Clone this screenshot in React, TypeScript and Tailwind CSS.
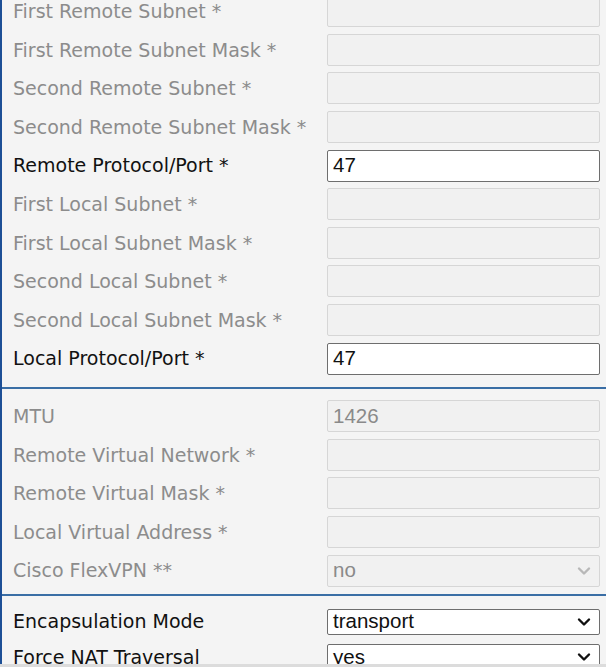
import React from "react";

type Row = { label: string; enabled?: boolean; value?: string; select?: boolean };

const sec1: Row[] = [
  { label: "First Remote Subnet *" },
  { label: "First Remote Subnet Mask *" },
  { label: "Second Remote Subnet *" },
  { label: "Second Remote Subnet Mask *" },
  { label: "Remote Protocol/Port *", enabled: true, value: "47" },
  { label: "First Local Subnet *" },
  { label: "First Local Subnet Mask *" },
  { label: "Second Local Subnet *" },
  { label: "Second Local Subnet Mask *" },
  { label: "Local Protocol/Port *", enabled: true, value: "47" },
];

const sec2: Row[] = [
  { label: "MTU", value: "1426" },
  { label: "Remote Virtual Network *" },
  { label: "Remote Virtual Mask *" },
  { label: "Local Virtual Address *" },
  { label: "Cisco FlexVPN **", value: "no", select: true },
];

function Chevron({ color }: { color: string }) {
  return (
    <svg width="14" height="10" viewBox="0 0 14 10" className="shrink-0">
      <path d="M2 2.5 L7 7.5 L12 2.5" fill="none" stroke={color} strokeWidth="2.4" strokeLinecap="round" strokeLinejoin="round" />
    </svg>
  );
}

function FieldRow({ r }: { r: Row }) {
  return (
    <div className="flex items-center h-[38.6px] shrink-0">
      <div
        className={
          "w-[325px] pl-[11px] text-[19px] font-['DejaVu_Sans',sans-serif] whitespace-nowrap " +
          (r.enabled ? "text-[#111111]" : "text-[#8c8c8c]")
        }
      >
        {r.label}
      </div>
      <div
        className={
          "w-[273px] h-[32px] rounded-[2px] border flex items-center px-[5px] text-[20.5px] font-['Liberation_Sans',Arial,sans-serif] " +
          (r.enabled
            ? "bg-white border-[#6e6e6e] text-[#111111]"
            : "bg-[#f1f1f1] border-[#d6d6d6] text-[#8a8a8a]")
        }
      >
        <span className="flex-1">{r.value ?? ""}</span>
        {r.select && (
          <span className="pr-[3px]">
            <Chevron color="#b8b8b8" />
          </span>
        )}
      </div>
    </div>
  );
}

function SelectRow({ label, value }: { label: string; value: string }) {
  return (
    <div className="flex items-center h-[35.5px] shrink-0">
      <div className="w-[325px] pl-[11px] text-[19px] font-['DejaVu_Sans',sans-serif] text-[#111111] whitespace-nowrap">
        {label}
      </div>
      <div className="w-[273px] h-[26px] rounded-[2px] border border-[#6e6e6e] bg-white flex items-center pl-[5px] pr-[8px] text-[20.5px] font-['Liberation_Sans',Arial,sans-serif] text-[#111111]">
        <span className="flex-1 leading-none">{value}</span>
        <Chevron color="#111111" />
      </div>
    </div>
  );
}

export default function App() {
  return (
    <div className="w-[606px] h-[667px] overflow-hidden bg-[#f4f4f4] flex flex-col">
      <div className="flex-1 min-h-0 flex flex-col border-l-2 border-[#1d4f96] overflow-hidden">
        <div className="-mt-[8px] flex flex-col shrink-0">
          {sec1.map((r) => (
            <FieldRow key={r.label} r={r} />
          ))}
        </div>
        <div className="mt-[9px] h-[2px] bg-[#3a6ea5] shrink-0" />
        <div className="mt-[8px] flex flex-col shrink-0">
          {sec2.map((r) => (
            <FieldRow key={r.label} r={r} />
          ))}
        </div>
        <div className="mt-[4px] h-[2px] bg-[#3a6ea5] shrink-0" />
        <div className="mt-[8px] flex flex-col shrink-0">
          <SelectRow label="Encapsulation Mode" value="transport" />
          <SelectRow label="Force NAT Traversal" value="yes" />
        </div>
      </div>
      <div className="h-[3px] bg-[#dcdcdc] shrink-0" />
    </div>
  );
}
